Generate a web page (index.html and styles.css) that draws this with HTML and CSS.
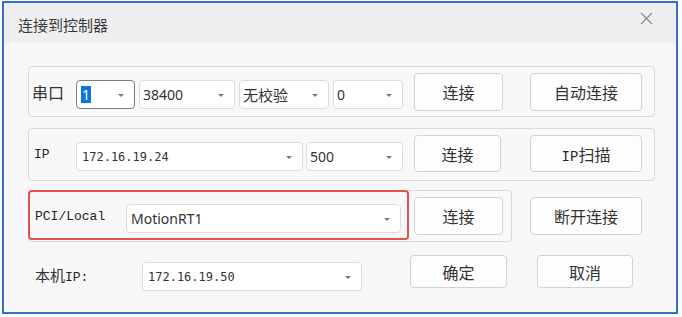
FILE: index.html
```html
<!DOCTYPE html>
<html>
<head>
<meta charset="utf-8">
<title>连接到控制器</title>
<link rel="stylesheet" href="styles.css">
</head>
<body>
<div class="window">
  <div class="titlebar">
    <span class="title">连接到控制器</span>
    <svg class="close" width="13" height="13" viewBox="0 0 13 13"><path d="M1 1L12 12M12 1L1 12" stroke="#8a8a8a" stroke-width="1.2" fill="none"/></svg>
  </div>

  <div class="content">
    <!-- serial port -->
    <div class="group g-serial">
      <span class="label l-serial">串口</span>
      <div class="combo c-port focus"><span class="sel">1</span><i class="caret"></i></div>
      <div class="combo c-baud"><span class="num">38400</span><i class="caret"></i></div>
      <div class="combo c-parity"><span class="cjk">无校验</span><i class="caret"></i></div>
      <div class="combo c-stop"><span class="num">0</span><i class="caret"></i></div>
      <button class="btn b-conn">连接</button>
      <button class="btn b-wide">自动连接</button>
    </div>

    <!-- ip -->
    <div class="group g-ip">
      <span class="label mono l-ip">IP</span>
      <div class="combo c-ipaddr"><span class="ipnum">172.16.19.24</span><i class="caret"></i></div>
      <div class="combo c-port2"><span class="num">500</span><i class="caret"></i></div>
      <button class="btn b-conn2">连接</button>
      <button class="btn b-wide b-scan"><span class="mono scan">IP</span>扫描</button>
    </div>

    <!-- pci -->
    <div class="row-pci">
      <div class="group g-pci">
        <div class="mark"></div>
        <span class="label mono l-pci">PCI/Local</span>
        <div class="combo c-local"><span class="num">MotionRT1</span><i class="caret"></i></div>
        <button class="btn b-conn3">连接</button>
      </div>
      <button class="btn b-wide b-disc">断开连接</button>
    </div>

    <!-- local ip -->
    <div class="row-local">
      <span class="label l-local">本机<span class="mono">IP:</span></span>
      <div class="combo c-localip"><span class="ipnum">172.16.19.50</span><i class="caret"></i></div>
      <button class="btn b-ok">确定</button>
      <button class="btn b-cancel">取消</button>
    </div>
  </div>
</div>
</body>
</html>
```

FILE: styles.css
```css
body
{
margin:0;
background:#ffffff;
font-family:"Noto Sans CJK SC", "Noto Sans", sans-serif;
color:#333333;
}

.window
{
margin:1px 0 0 2px;
width:676px;
height:313px;
box-sizing:border-box;
border:2px solid #3473c4;
background:#f7f7f7;
}

.titlebar
{
height:40px;
background:#efefef;
display:flex;
align-items:center;
justify-content:space-between;
padding:0 23px 0 14px;
}

.title
{
font-size:15px;
color:#3a3a3a;
margin-top:2px;
}

.close
{
margin-top:-10px;
}

.content
{
padding-left:24px;
}

.group
{
display:flex;
align-items:center;
box-sizing:border-box;
width:627px;
border:1px solid #d9d9d9;
border-radius:4px;
background:#f8f8f8;
}

.label
{
font-size:16px;
color:#333333;
flex:none;
}

.mono
{
font-family:"Liberation Mono", monospace;
color:#222222;
}

.combo
{
position:relative;
flex:none;
box-sizing:border-box;
height:29px;
border:1px solid #dcdcdc;
border-radius:4px;
background:#ffffff;
display:flex;
align-items:center;
padding-left:3px;
}

.combo.focus
{
border-color:#7d7d7d;
}

.caret
{
position:absolute;
right:10px;
top:13px;
width:0;
height:0;
border-left:3px solid transparent;
border-right:3px solid transparent;
border-top:3px solid #7a7a7a;
}

.num
{
font-family:"Noto Sans", sans-serif;
font-size:14px;
color:#333333;
}

.cjk
{
font-size:15px;
color:#333333;
}

.ipnum
{
font-family:"DejaVu Sans Mono", monospace;
font-size:12px;
color:#333333;
padding-left:1px;
}

.sel
{
background:#0a78d7;
color:#ffffff;
font-family:"Noto Sans", sans-serif;
font-size:14px;
padding:0 1px;
line-height:17px;
}

.btn
{
flex:none;
box-sizing:border-box;
height:38px;
border:1px solid #d2d2d2;
border-radius:4px;
background:#fdfdfd;
font-family:"Noto Sans CJK SC", sans-serif;
font-size:16px;
color:#333333;
padding:0;
}

/* row 1 */
.g-serial
{
margin-top:23px;
height:51px;
}
.l-serial
{
margin-left:3px;
width:44px;
}
.g-serial .combo
{
margin-top:6px;
}
.c-port { width:59px; }
.c-baud { width:96px; margin-left:4px; }
.c-parity { width:90px; margin-left:4px; }
.c-stop { width:70px; margin-left:4px; }
.c-port .sel { margin-left:1px; }
.b-conn { width:89px; margin-left:11px; }
.b-wide { width:112px; margin-left:27px; }

/* row 2 */
.g-ip
{
margin-top:11px;
height:53px;
}
.l-ip
{
font-size:13px;
margin-left:5px;
width:42px;
}
.g-ip .combo
{
margin-top:4px;
}
.c-ipaddr { width:227px; padding-left:4px; }
.c-port2 { width:97px; margin-left:3px; }
.b-conn2 { width:87px; margin-left:11px; height:37px; margin-top:-2px; }
.b-scan { margin-left:29px; height:37px; margin-top:-2px; }
.scan { font-size:14px; }

/* row 3 */
.row-pci
{
display:flex;
align-items:center;
margin-top:9px;
}
.g-pci
{
position:relative;
width:484px;
height:52px;
}
.mark
{
position:absolute;
left:-1px;
top:-1px;
width:381px;
height:50px;
box-sizing:border-box;
border:2px solid #e0534f;
border-radius:4px;
}
.l-pci
{
font-size:13px;
margin-left:6px;
width:91px;
}
.c-local
{
width:275px;
margin-top:5px;
padding-left:4px;
}
.b-conn3 { width:89px; margin-left:13px; }
.b-disc { margin-left:18px; }

/* row 4 */
.row-local
{
display:flex;
align-items:center;
margin-top:13px;
height:33px;
}
.l-local
{
margin-left:7px;
width:107px;
margin-top:5px;
font-size:15px;
}
.l-local .mono
{
font-size:13px;
}
.c-localip
{
width:220px;
margin-top:10px;
padding-left:4px;
}
.b-ok { width:97px; height:33px; margin-left:48px; }
.b-cancel { width:96px; height:33px; margin-left:30px; }
```
